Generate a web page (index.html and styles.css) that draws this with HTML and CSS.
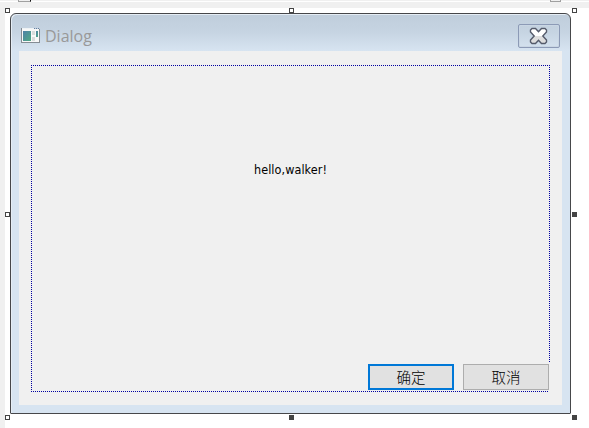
FILE: index.html
```
<!DOCTYPE html>
<html lang="zh-CN">
<head>
<meta charset="utf-8">
<title>Dialog</title>
<link rel="stylesheet" href="styles.css">
</head>
<body>
<div class="scroll-edge"><span class="scroll-left"></span><span class="scroll-right"></span></div>
<main class="canvas">
  <section class="dialog">
    <header class="titlebar">
      <svg class="app-icon" width="19" height="15" viewBox="0 0 19 15" shape-rendering="crispEdges">
        <defs><linearGradient id="pane" x1="0" y1="0" x2="1" y2="1"><stop offset="0" stop-color="#4e80a8"/><stop offset="1" stop-color="#4faa83"/></linearGradient></defs>
        <path fill="#858c94" d="M0 0h1v15H0zM18 1h1v14h-1zM0 14h19v1H0z"/>
        <path fill="#f8f8f8" d="M1 1h17v13H1z"/>
        <path fill="#eef2f5" d="M1 0h12v1H1z"/>
        <path fill="#657f9f" d="M13 0h1v1h-1zM15 0h1v1h-1zM17 0h1v1h-1z"/>
        <path fill="url(#pane)" d="M2 3h8v10H2z"/>
        <path fill="#d9dcdc" d="M11 3h3v4h-3zM11 9h3v4h-3z"/>
        <path fill="url(#pane)" d="M15 3h2v6h-2z"/>
      </svg>
      <h1 class="title">Dialog</h1>
      <button class="close" aria-label="Close">
        <svg width="20" height="18" viewBox="0 0 20 18">
          <defs><linearGradient id="cross" x1="0" y1="0" x2="0" y2="1"><stop offset=".48" stop-color="#fff"/><stop offset=".52" stop-color="#dedede"/></linearGradient></defs>
          <path d="M3 1.5H6.5L9.5 4.8l3-3.3H16l1.5 1.5v2L13.8 9l3.7 4v2L16 16.5h-3.5l-3-3.3-3 3.3H3L1.500 15v-2L5.200 9 1.500 5V3z" fill="url(#cross)" stroke="#555b6b" stroke-width="1.4"/>
        </svg>
      </button>
    </header>
    <div class="client">
      <svg class="guide" width="519" height="327" shape-rendering="crispEdges">
        <path d="M0 .5H519M0 326.5H518M.5 0V327M518.5 0V297"/>
      </svg>
      <p class="message">hello,walker!</p>
      <div class="actions">
        <button class="button primary">确定</button>
        <button class="button">取消</button>
      </div>
    </div>
  </section>
</main>
<i class="handle nw"></i><i class="handle n"></i><i class="handle ne"></i>
<i class="handle w"></i><i class="handle e solid"></i>
<i class="handle sw"></i><i class="handle s solid"></i><i class="handle se solid"></i>
</body>
</html>
```
FILE: styles.css
```
* { box-sizing: border-box; }
body {
  margin: 0;
  width: 589px;
  height: 428px;
  overflow: hidden;
  position: relative;
  background: #f0f0f0;
}
.scroll-edge {
  height: 8px;
  padding: 0 28px 0 18px;
  display: flex;
  justify-content: space-between;
  background: linear-gradient(#f0f0f0 1px, #fff 1px, #fff 2px, #f0f0f0 2px);
}
.scroll-left, .scroll-right {
  width: 13px;
  height: 2px;
  border: 1px solid #a0a0a0;
  border-top: 0;
}
.scroll-left { border-right-color: #111; }
.scroll-right { width: 11px; }
.canvas {
  margin-left: 5px;
  padding: 5px 0 0 5px;
  height: 420px;
  background: #fff;
}
.dialog {
  width: 561px;
  height: 401px;
  padding: 0 8px 8px;
  border: 1px solid #46474a;
  border-radius: 6px 6px 1px 1px;
  background: linear-gradient(#bfcddb, #c6d4e2 18px, #d7e4f1 37px);
  box-shadow: inset 1px 1px #e5edf5;
}
.titlebar {
  height: 37px;
  display: flex;
  align-items: flex-start;
  padding: 0 2px;
}
.app-icon { margin-top: 14px; }
.title {
  margin: 12px 0 0 5px;
  font: 400 16px/21px "Open Sans", sans-serif;
  color: #999;
}
.close {
  margin: 10px 0 0 auto;
  width: 42px;
  height: 24px;
  padding: 0;
  display: flex;
  align-items: center;
  justify-content: center;
  border: 1px solid #8c9ab6;
  border-radius: 2px;
  background: none;
  box-shadow: inset 0 0 0 1px #c9d6e4;
}
.client {
  position: relative;
  height: 354px;
  padding: 112px 13px 15px;
  display: flex;
  flex-direction: column;
  justify-content: space-between;
  background: #f0f0f0;
}
.guide { position: absolute; left: 12px; top: 14px; }
.guide path {
  stroke: #0000a0;
  stroke-dasharray: 1 1;
  fill: none;
}
.message {
  margin: 0;
  text-align: center;
  font: 12.5px/14px "DejaVu Sans Condensed", "DejaVu Sans", sans-serif;
  letter-spacing: 0.08px;
  color: #000;
}
.actions {
  display: flex;
  justify-content: flex-end;
  gap: 9px;
}
.button {
  width: 86px;
  height: 26px;
  padding: 0 0 1px;
  border: 1px solid #adadad;
  background: #e1e1e1;
  color: #000;
  font: 300 14.5px/21px "Noto Sans CJK SC", sans-serif;
}
.primary { border: 2px solid #0078d7; }
.handle {
  position: absolute;
  width: 5px;
  height: 5px;
  border: 1px solid #444;
  background: #fff;
}
.solid { background: #444; }
.nw, .n, .ne { top: 8px; }
.w, .e { top: 212px; }
.sw, .s, .se { top: 415px; }
.nw, .w, .sw { left: 5px; }
.n, .s { left: 289px; }
.ne, .e, .se { left: 572px; }
```
